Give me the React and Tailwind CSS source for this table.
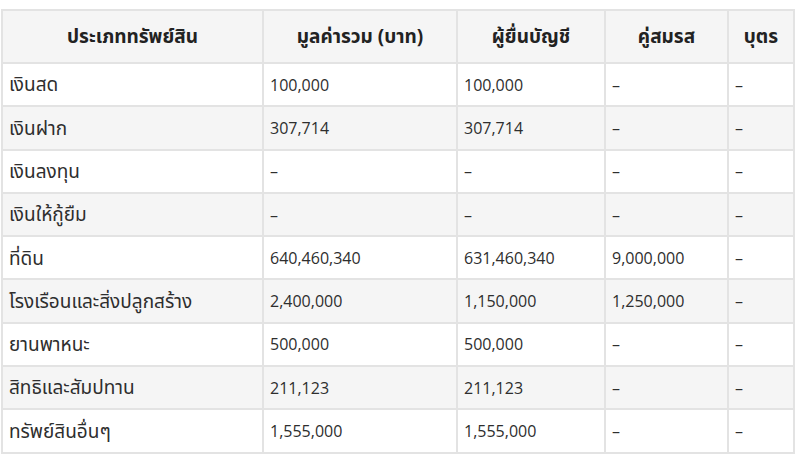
const rows = [
  ['เงินสด', '100,000', '100,000', '–', '–'],
  ['เงินฝาก', '307,714', '307,714', '–', '–'],
  ['เงินลงทุน', '–', '–', '–', '–'],
  ['เงินให้กู้ยืม', '–', '–', '–', '–'],
  ['ที่ดิน', '640,460,340', '631,460,340', '9,000,000', '–'],
  ['โรงเรือนและสิ่งปลูกสร้าง', '2,400,000', '1,150,000', '1,250,000', '–'],
  ['ยานพาหนะ', '500,000', '500,000', '–', '–'],
  ['สิทธิและสัมปทาน', '211,123', '211,123', '–', '–'],
  ['ทรัพย์สินอื่นๆ', '1,555,000', '1,555,000', '–', '–'],
];

const headers = ['ประเภททรัพย์สิน', 'มูลค่ารวม (บาท)', 'ผู้ยื่นบัญชี', 'คู่สมรส', 'บุตร'];
const widths = ['w-[261px]', 'w-[194px]', 'w-[148px]', 'w-[123px]', 'w-[66px]'];

export default function App() {
  return (
    <div
      className="bg-white w-[796px] h-[456px] pt-[9px] pl-[1px] text-[#2e2e2e]"
      style={{ fontFamily: '"Open Sans", "Noto Sans", "Noto Sans Thai", sans-serif' }}
    >
      <table className="border-collapse w-[792px] table-fixed">
        <thead>
          <tr className="bg-[#f5f5f5] h-[53px]">
            {headers.map((h, i) => (
              <th
                key={h}
                className={`${widths[i]} border-2 border-[#e3e3e3] font-bold text-center text-[19px] px-2 text-[#222]`}
              >
                {h}
              </th>
            ))}
          </tr>
        </thead>
        <tbody>
          {rows.map((r, ri) => (
            <tr key={r[0]} className={ri % 2 === 1 ? 'bg-[#f5f5f5] h-[43.3px]' : 'bg-white h-[43.3px]'}>
              {r.map((c, ci) => (
                <td
                  key={ci}
                  className={
                    ci === 0
                      ? 'border-2 border-[#e3e3e3] pl-[6px] pr-2 text-left text-[19px]'
                      : 'border-2 border-[#e3e3e3] pl-[6px] pr-2 text-left text-[16px]'
                  }
                >
                  {c}
                </td>
              ))}
            </tr>
          ))}
        </tbody>
      </table>
    </div>
  );
}
